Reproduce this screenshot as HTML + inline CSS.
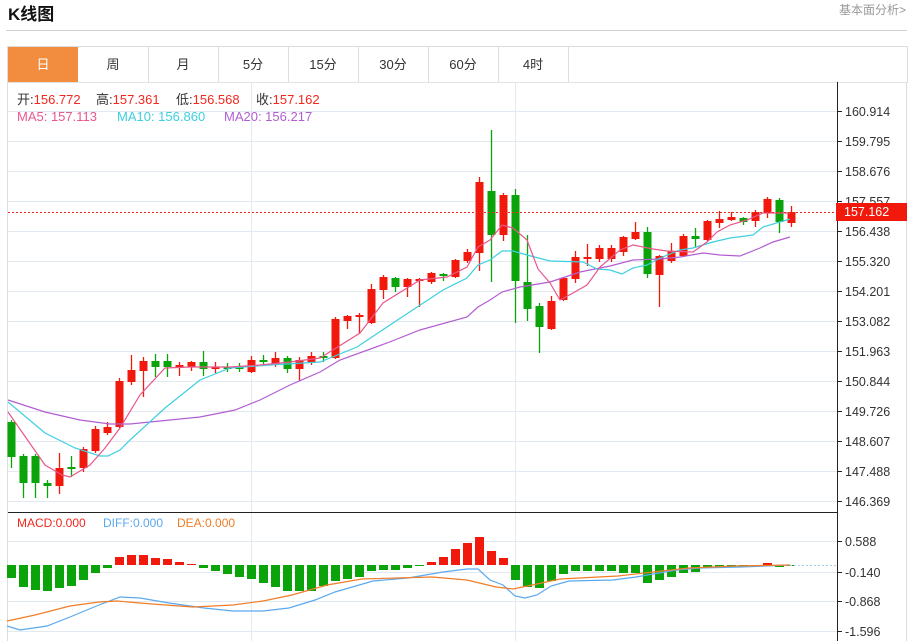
<!DOCTYPE html>
<html><head><meta charset="utf-8"><style>
body{margin:0;width:914px;height:641px;background:#fff;overflow:hidden;font-family:"Liberation Sans","Noto Sans CJK SC",sans-serif;position:relative}
.t{position:absolute;left:8px;top:0px;font-size:17px;font-weight:bold;color:#111}
.more{position:absolute;right:8px;top:1px;font-size:12px;color:#999}
.hr{position:absolute;left:6px;top:30px;width:901px;height:1px;background:#d0d0d0}
.tabs{position:absolute;left:7px;top:46px;width:899px;height:35px;border:1px solid #ddd;border-bottom:1px solid #e3e3e3}
.tab{position:absolute;top:0;height:35px;width:70px;border-right:1px solid #ddd;text-align:center;line-height:35px;font-size:13px;color:#333}
.tab.on{background:#f28c3f;color:#fff;border-right:none}
svg{position:absolute;left:0;top:0}
</style></head><body>
<div class="t">K线图</div>
<div class="more">基本面分析&gt;</div>
<div class="hr"></div>
<div class="tabs">
<div class="tab on" style="left:0">日</div>
<div class="tab" style="left:70px">周</div>
<div class="tab" style="left:140px">月</div>
<div class="tab" style="left:210px">5分</div>
<div class="tab" style="left:280px">15分</div>
<div class="tab" style="left:350px">30分</div>
<div class="tab" style="left:420px">60分</div>
<div class="tab" style="left:490px">4时</div>
</div>
<svg id="s" width="914" height="641" xmlns="http://www.w3.org/2000/svg" font-family="Liberation Sans, Noto Sans CJK SC, sans-serif">
<g id="grid" stroke="#e3e9f0" stroke-width="1"></g>
<line x1="7.5" y1="82" x2="7.5" y2="641" stroke="#ddd"/>
<line x1="906.5" y1="82" x2="906.5" y2="641" stroke="#ddd"/>
<line x1="251.5" y1="82" x2="251.5" y2="641" stroke="#e3e9f0"/>
<line x1="515.5" y1="82" x2="515.5" y2="641" stroke="#e3e9f0"/>
<line x1="837.5" y1="82" x2="837.5" y2="641" stroke="#222"/>
<line x1="8" y1="512.5" x2="837" y2="512.5" stroke="#222"/>
<g font-size="13">
<text x="17" y="104" fill="#333">开:<tspan fill="#f0281e">156.772</tspan></text>
<text x="96" y="104" fill="#333">高:<tspan fill="#f0281e">157.361</tspan></text>
<text x="176" y="104" fill="#333">低:<tspan fill="#f0281e">156.568</tspan></text>
<text x="256" y="104" fill="#333">收:<tspan fill="#f0281e">157.162</tspan></text>
<text x="17" y="121" fill="#e9578d">MA5: 157.113</text>
<text x="117" y="121" fill="#3ccfe0">MA10: 156.860</text>
<text x="224" y="121" fill="#b25ed1">MA20: 156.217</text>
</g>
<g font-size="12">
<text x="17" y="527" fill="#f0281e">MACD:0.000</text>
<text x="103" y="527" fill="#5aa9f0">DIFF:0.000</text>
<text x="177" y="527" fill="#f07d28">DEA:0.000</text>
</g>
<g id="lab" font-size="12.5" fill="#333"></g>
<g id="macd"></g>
<g id="k"></g>
<polyline fill="none" stroke="#b25ed1" stroke-width="1.2" points="8,400 45,412 80,420 110,424 130,424 170,420 200,417 235,410 260,400 290,385 320,372 340,360 387,343 420,330 467,317 478,307 490,300 502,292 520,287 550,282 580,272 610,266 633,260 660,259 680,257 703,253 720,255 740,256 760,248 773,242 790,237"/>
<polyline fill="none" stroke="#3ccfe0" stroke-width="1.2" points="8,402 45,433 75,448 100,456 108,456 120,450 130,440 165,408 200,380 230,368 270,365 320,362 357,347 393,323 443,290 467,278 478,265 490,260 502,251 513,251 527,255 550,261 583,262 597,269 610,270 622,274 633,268 647,265 660,258 680,250 693,248 713,242 730,238 753,235 763,227 790,219"/>
<polyline fill="none" stroke="#e9578d" stroke-width="1.2" points="8,412 45,465 62,475 70,477 90,465 105,448 120,428 140,395 165,368 190,367 230,367 260,365 290,362 320,358 360,333 383,303 420,280 447,277 467,267 478,247 490,240 502,225 513,228 527,240 538,269 550,283 560,300 573,293 587,285 600,267 620,250 633,245 653,249 667,251 693,252 707,242 717,232 730,225 747,220 763,213 790,213"/>
<polyline fill="none" stroke="#5aa9f0" stroke-width="1.2" points="7,626 20,630 47,626 70,617 99,605 120,597 140,598 169,603 204,608 233,611 263,611 289,608 315,600 335,592 373,581 408,578 443,572 467,569 478,569 490,580 503,585 515,596 525,598 537,595 551,586 569,581 613,580 636,577 653,574 677,570 700,568 741,567 790,565"/>
<polyline fill="none" stroke="#f07d28" stroke-width="1.2" points="7,621 35,615 70,606 99,602 117,601 152,604 193,607 233,605 263,601 292,595 327,585 362,579 397,578 432,577 467,580 496,587 513,589 537,584 560,579 618,576 653,572 689,568 735,566 790,565"/>
<line x1="790" y1="565.5" x2="836" y2="565.5" stroke="#9fd3e8" stroke-dasharray="2,2"/>
<line x1="8" y1="212.5" x2="836" y2="212.5" stroke="#f0281e" stroke-dasharray="2,2"/>
<rect x="836" y="203" width="71" height="18" fill="#f0190c"/>
<text x="844" y="216" font-size="12.5" fill="#fff">157.162</text>
</svg>
<script>
var ns="http://www.w3.org/2000/svg";
function el(p,t,a){var e=document.createElementNS(ns,t);for(var k in a)e.setAttribute(k,a[k]);document.getElementById(p).appendChild(e);return e;}
var ys=[111,141,171,201,231,261,291,321,351,381,411,441,471,501];
var lb=["160.914","159.795","158.676","157.557","156.438","155.320","154.201","153.082","151.963","150.844","149.726","148.607","147.488","146.369"];
ys.forEach(function(y,i){el("grid","line",{x1:8,x2:837,y1:y+.5,y2:y+.5});el("grid","line",{x1:837,x2:842,y1:y+.5,y2:y+.5,stroke:"#222"});var t=el("lab","text",{x:845,y:y+5});t.textContent=lb[i];});
var my=[541,572,601,631],ml=["0.588","-0.140","-0.868","-1.596"];
my.forEach(function(y,i){el("grid","line",{x1:8,x2:837,y1:y+.5,y2:y+.5});el("grid","line",{x1:837,x2:842,y1:y+.5,y2:y+.5,stroke:"#222"});var t=el("lab","text",{x:845,y:y+5});t.textContent=ml[i];});
var K=[[422,457,420,468,'g'],[456,483,454,498,'g'],[456,483,454,498,'g'],[483,486,480,498,'g'],[468,486,453,494,'r'],[467,469,456,477,'g'],[449,468,447,472,'r'],[429,451,426,453,'r'],[427,433,422,435,'r'],[381,427,378,428,'r'],[370,382,355,385,'r'],[361,371,357,397,'r'],[361,367,354,377,'g'],[361,367,354,377,'g'],[365,368,362,376,'r'],[362,367,361,371,'r'],[362,369,351,376,'g'],[367,369,362,373,'r'],[367,369,363,372,'g'],[367,369,363,372,'g'],[360,372,356,373,'r'],[360,362,355,365,'g'],[358,364,352,367,'r'],[358,369,356,373,'g'],[360,369,357,381,'r'],[356,363,352,365,'r'],[356,358,352,362,'g'],
[319,358,317,359,'r'],[316,321,315,329,'r'],[315,317,313,333,'r'],[289,323,284,324,'r'],[277,290,275,299,'r'],[278,287,277,292,'g'],[279,287,278,297,'r'],[279,281,278,307,'r'],[273,282,272,284,'r'],[274,275,273,281,'g'],[260,277,259,278,'r'],[252,261,249,263,'r'],[182,253,177,271,'r'],[191,235,130,282,'g'],[195,235,193,241,'r'],[195,281,189,323,'g'],[282,309,235,321,'g'],[306,327,303,353,'g'],[301,329,296,330,'r'],[278,300,277,301,'r'],[257,279,251,283,'r'],[257,259,244,266,'r'],[248,259,245,262,'r'],[248,259,245,262,'r'],[237,252,236,256,'r'],[232,239,222,240,'r'],[232,274,227,278,'g'],[256,275,255,307,'r'],[251,261,243,263,'r'],[236,256,234,257,'r'],[236,239,228,247,'g'],[221,240,220,241,'r'],[219,223,211,228,'r'],[217,220,212,221,'r'],[218,222,217,225,'g'],[212,221,210,227,'r'],[199,213,197,218,'r'],[200,222,198,233,'g'],[212,223,206,227,'r']];
var R="#f0190c",G="#0aa30a";
K.forEach(function(c,i){var x=11+12*i,col=c[4]=='r'?R:G;el("k","line",{x1:x+.5,x2:x+.5,y1:c[2],y2:c[3],stroke:col,"stroke-width":1.3});el("k","rect",{x:x-3.5,y:c[0],width:8,height:Math.max(2,c[1]-c[0]),fill:col});});
var M=[578,587,590,591,588,586,580,573,568,557,555,555,558,559,562,564,568,571,574,577,579,583,587,591,591,591,586,581,579,577,571,570,570,568,566,562,557,549,543,537,551,558,580,587,588,581,574,571,571,571,571,573,573,583,580,577,573,572,568,567,567,566,566,563,567,566];
M.forEach(function(y,i){var x=11+12*i,z=565;var top=Math.min(y,z),h=Math.max(1,Math.abs(y-z));el("macd","rect",{x:x-4,y:top,width:9,height:h,fill:y<z?R:G});});
</script>
</body></html>
